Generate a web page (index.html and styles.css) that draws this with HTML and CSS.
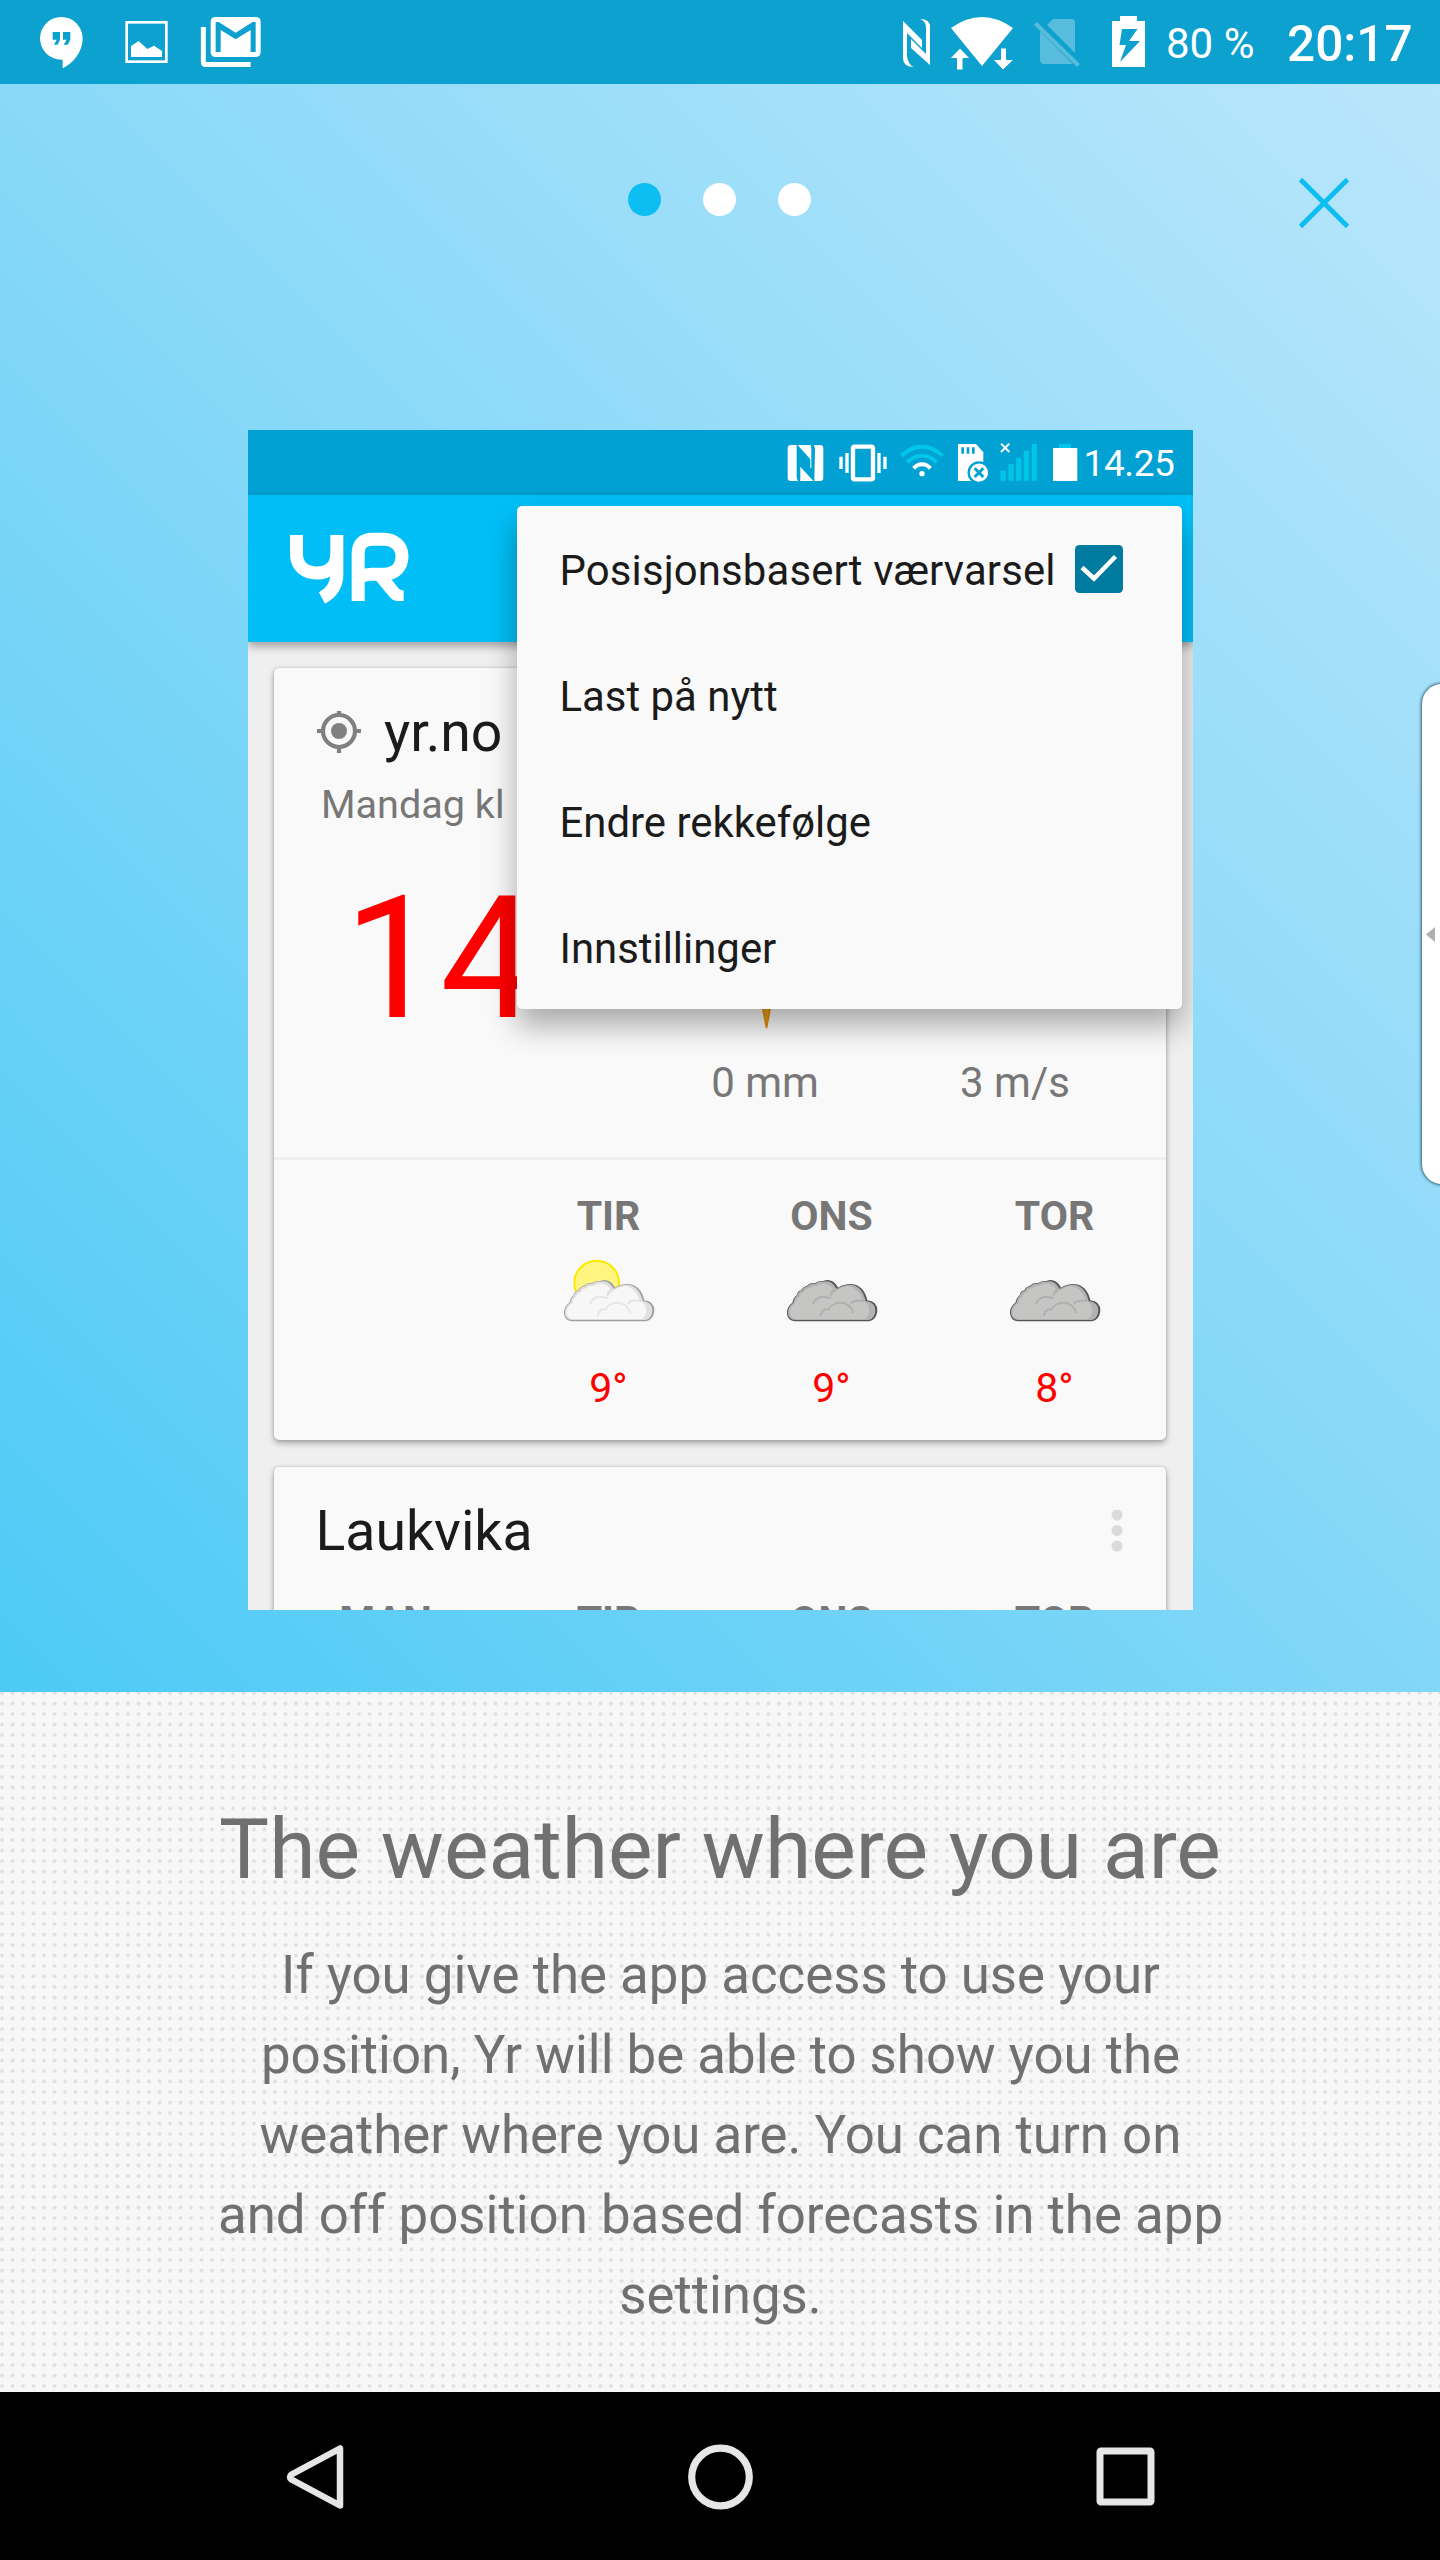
FILE: index.html
```html
<!DOCTYPE html>
<html lang="en">
<head>
<meta charset="utf-8">
<title>Yr – The weather where you are</title>
<link rel="stylesheet" href="styles.css">
</head>
<body>
<svg class="defs" aria-hidden="true">
  <defs>
    <g id="cloud">
      <path class="cloud-edge" d="M66 213C50 213 41 202 41 186C41 172 50 162 57 157Q60 142 70 135Q72 122 84 120Q90 108 100 107Q110 96 124 99Q136 90 150 92Q175 82 192 108L194 112Q212 100 235 101Q272 105 282 150Q312 152 312 182Q309 208 288 213Z"/>
      <path class="cloud-rim" d="M67 209C52 209 44 200 44 186C44 172 52 163 60 158Q62 143 71 136Q74 123 86 121Q91 109 101 109Q110 98 125 101Q136 92 150 94Q174 87 188 113L192 115Q212 102 234 103Q267 108 277 152Q306 155 306 181Q304 205 286 209Z"/>
      <path class="cloud-body" d="M69 206C56 206 49 198 49 186C49 174 58 163 67 158Q66 148 78 140Q80 128 92 126Q97 113 106 115Q118 104 130 107Q145 97 158 101Q172 104 180 115Q166 126 170 140Q190 112 224 107Q256 112 268 150Q288 160 288 181Q286 200 274 206Z"/>
      <path class="cloud-line" d="M119 162C124 144 142 136 160 141Q166 143 172 144M142 197C144 180 156 175 165 178C178 152 226 146 240 188M232 160Q246 146 272 153"/>
    </g>
  </defs>
</svg>

<header class="status">
  <div class="status-side">
    <svg width="70" height="84" viewBox="100 0 210 252" fill="#fff"><path fill-rule="evenodd" d="M185 51A64 64 0 0 1 249 115C249 155 222 190 189 205V179H185A64 64 0 0 1 185 51ZM159 96V119H171L163 134H174L181 119V96ZM190 96V119H201L192 134H204L212 119V96Z"/></svg>
    <svg width="80" height="84" viewBox="310 0 240 252"><rect x="381" y="67" width="119" height="118" fill="none" stroke="#fff" stroke-width="8"/><path fill="#fff" d="M394 171V138L417 123L443 147L463 137L487 153V171Z"/></svg>
    <svg width="84" height="84" viewBox="550 0 252 252"><rect x="633" y="51" width="150" height="120" rx="14" fill="#fff"/><path d="M648 66H657L708 98L759 66H768V156H753V90L708 118L663 90V156H648Z" fill="#0ca1cf"/><path d="M611 81V186Q611 193.500 618 193.500H753" fill="none" stroke="#fff" stroke-width="15"/></svg>
  </div>
  <div class="status-side">
    <svg width="45" height="84" viewBox="895 0 45 84" fill="#fff"><path d="M903 21L922 40V48L907 33V56Q908 65 914 67Q903 67 903 58ZM920 19Q930 19 930 27V65L911 48V39L926 54V28Q926 21 920 19Z"/></svg>
    <svg width="82" height="84" viewBox="940 0 82 84" fill="#fff"><path d="M951 28Q982 6 1013 28L982 66Z"/><path d="M960 48L970 58.500H963V70H956.500V58.500H950Z" stroke="#0ca1cf" stroke-width="1"/><path d="M1003 70L993 59.500H1000.500V48H1006.500V59.500H1014Z" stroke="#0ca1cf" stroke-width="1"/></svg>
    <svg width="73" height="84" viewBox="1022 0 73 84"><path fill="#58bcdc" d="M1040 31L1073 64H1044Q1040 64 1040 59ZM1047 25L1053 19H1072Q1075 19 1075 23V53Z"/><path d="M1035.500 23.500L1078.500 65.500" stroke="#58bcdc" stroke-width="4"/></svg>
    <svg width="70" height="84" viewBox="1095 0 70 84"><path fill="#fff" d="M1112 21H1120V16H1137V21H1145V67H1112Z"/><path fill="#0ca1cf" d="M1122 29H1137.500L1129 41H1140L1120 62L1126 45H1119.500Z"/></svg>
    <span class="battery-level">80 %</span>
    <span class="clock">20:17</span>
  </div>
</header>

<main class="hero">
  <nav class="pager">
    <span class="dot dot-active"></span><span class="dot"></span><span class="dot"></span>
    <svg class="close" width="52" height="52" viewBox="0 0 52 52"><path d="M2.500 2.500L49.500 49.500M49.500 2.500L2.500 49.500" stroke="#0cbef2" stroke-width="4.800"/></svg>
  </nav>

  <section class="phone">
    <div class="phone-status">
      <svg width="44.300" height="43.300" viewBox="200 60 133 130"><rect x="202" y="75" width="107" height="108" rx="10" fill="#fff"/><path d="M229 72L270 118V152L240 118V176Q238 183 242 186H236Q229 180 229 172ZM282 186L240 140V112L273 146V84Q273 78 268 72H276Q284 76 284 86Z" fill="#01a1d3"/><path d="M236 88L266 121V142L236 107ZM246 124L277 158V176L246 142Z" fill="#fff" opacity="0"/></svg>
      <svg width="62.300" height="43.300" viewBox="333 60 187 130" fill="none" stroke="#fff"><rect x="399" y="80" width="60" height="98" rx="5" stroke-width="13"/><path d="M363 110V147M381 99V159M477 99V159M495 110V147" stroke-width="10"/></svg>
      <svg width="56.700" height="43.300" viewBox="520 60 170 130" fill="none" stroke-width="12"><path d="M543 108C578 71 630 71 665 108M560 127C586 101 622 101 648 127" stroke="#00c6e8"/><path d="M579 145C593 129 615 129 629 145" stroke="#fff"/><circle cx="604" cy="161" r="8" fill="#fff"/></svg>
      <svg width="43.300" height="43.300" viewBox="690 60 130 130"><path fill="#fff" d="M714 72H768L790 97V183H714Z"/><path d="M728 82V101M744 82V101M760 82V101" stroke="#01a1d3" stroke-width="8"/><circle cx="777" cy="158" r="31" fill="#fff" stroke="#01a1d3" stroke-width="7"/><path d="M764 145L790 171M790 145L764 171" stroke="#01a1d3" stroke-width="9"/></svg>
      <svg width="51.700" height="43.300" viewBox="820 60 155 130"><path d="M841 71L866 96M866 71L841 96" stroke="#fff" stroke-width="6"/><path d="M847 182V152M871 182V132M894 182V113M917 182V92M941 182V72" stroke="#00c6e8" stroke-width="15.500"/></svg>
      <svg width="38.300" height="43.300" viewBox="975 60 115 130"><path fill="#00c6e8" d="M1017 72H1053V84H1017Z"/><path fill="#fff" d="M999 84H1072V183H999Z"/></svg>
      <span class="phone-clock">14.25</span>
    </div>
    <div class="toolbar">
      <svg width="122" height="74" viewBox="142 334 366 222"><g fill="none" stroke="#fff" stroke-width="39"><path d="M167.500 346V404C167.500 441 195 460 228 460C262 460 288 441 288 404"/><path d="M288.500 346V464C288.500 496 272 520 244 535"/><path d="M352.500 544V402Q352.500 358.500 396 358.500H430C462 358.500 484 380 484 410C484 443 462 463.500 430 463.500H394Q366 463.500 352.500 478"/></g><path fill="#fff" d="M404 480L450 535Q458 544 468 544H489V513Q478 513 471 503L445 470Z"/></svg>
    </div>
    <div class="content">
      <article class="card card-main">
        <div class="now">
          <h2 class="place"><svg width="44" height="44" viewBox="0 0 44 44"><g fill="none" stroke="#808080" stroke-width="4.200"><circle cx="22" cy="20" r="16"/><path d="M22 -2V4M22 36V42M0 20H6M38 20H44"/></g><circle cx="22" cy="20" r="8" fill="#808080"/></svg>yr.no</h2>
          <p class="updated">Mandag kl</p>
          <div class="readings">
            <span class="temp">14</span>
            <div class="reading"><svg width="20" height="171" viewBox="0 0 20 171"><path d="M2 120L11.500 169L21 120Z" fill="#e8a21a" stroke="#e88a00" stroke-width="1.500"/></svg><span>0 mm</span></div>
            <div class="reading"><svg width="20" height="171"></svg><span>3 m/s</span></div>
          </div>
        </div>
        <div class="days">
          <div class="day"></div>
          <div class="day"><b>TIR</b><svg class="white" width="100" height="70" viewBox="26 20 300 210"><circle cx="139" cy="98" r="67" fill="#fff580" stroke="#fbe900" stroke-width="6"/><use href="#cloud"/></svg><span>9°</span></div>
          <div class="day"><b>ONS</b><svg class="grey" width="100" height="70" viewBox="26 20 300 210"><use href="#cloud"/></svg><span>9°</span></div>
          <div class="day"><b>TOR</b><svg class="grey" width="100" height="70" viewBox="26 20 300 210"><use href="#cloud"/></svg><span>8°</span></div>
        </div>
      </article>
      <article class="card card-next">
        <h2 class="place">Laukvika<svg class="more" width="12" height="44" viewBox="0 0 12 44" fill="#dbdbdb"><circle cx="6" cy="5" r="5.500"/><circle cx="6" cy="20.500" r="5.500"/><circle cx="6" cy="36" r="5.500"/></svg></h2>
        <div class="days">
          <div class="day"><b>MAN</b></div><div class="day"><b>TIR</b></div><div class="day"><b>ONS</b></div><div class="day"><b>TOR</b></div>
        </div>
      </article>
    </div>
    <ul class="menu">
      <li class="menu-check">Posisjonsbasert værvarsel<svg width="48" height="48" viewBox="0 0 48 48"><rect width="48" height="48" rx="4.500" fill="#007ba0"/><path d="M7 22.500L19 33.500L40.500 11.500" fill="none" stroke="#fff" stroke-width="4.500"/></svg></li>
      <li>Last på nytt</li>
      <li>Endre rekkefølge</li>
      <li>Innstillinger</li>
    </ul>
  </section>
  <div class="edge-handle"><svg width="9" height="15" viewBox="0 0 9 15"><path d="M0 7.500L9 0V15Z" fill="#b0b0b0"/></svg></div>
</main>

<section class="intro">
  <h1>The weather where you are</h1>
  <p>If you give the app access to use your position, Yr will be able to show you the weather where you are. You can turn on and off position based forecasts in the app settings.</p>
</section>

<footer class="navbar">
  <svg width="70" height="70" viewBox="0 0 70 70"><path d="M60 6.500V63.500L11.500 37.500Q8.500 35 11.500 32.500Z" fill="none" stroke="#e6e6e6" stroke-width="6.500" stroke-linejoin="round"/></svg>
  <svg width="70" height="70" viewBox="0 0 70 70"><circle cx="35.500" cy="35" r="28.800" fill="none" stroke="#e6e6e6" stroke-width="7.200"/></svg>
  <svg width="70" height="70" viewBox="0 0 70 70"><rect x="10" y="9" width="51" height="51" rx="1" fill="none" stroke="#e6e6e6" stroke-width="7"/></svg>
</footer>
</body>
</html>
```
FILE: styles.css
```css
* { box-sizing: border-box; margin: 0; padding: 0; }
body {
  width: 1440px;
  height: 2560px;
  overflow: hidden;
  display: flex;
  flex-direction: column;
  font-family: Roboto, "Liberation Sans", sans-serif;
}
svg { display: block; flex: none; }
.defs { position: absolute; width: 0; height: 0; }

.status {
  height: 84px;
  flex: none;
  display: flex;
  justify-content: space-between;
  padding: 0 28px 0 33px;
  background: #0ca1cf;
  color: #fff;
}
.status-side { display: flex; align-items: center; }
.battery-level { font-size: 42px; line-height: 84px; padding: 3px 0 0 1px; width: 122px; white-space: nowrap; }
.clock { font-size: 49.5px; font-weight: 500; line-height: 84px; padding-top: 3px; width: 125px; white-space: nowrap; }

.hero {
  position: relative;
  height: 1608px;
  flex: none;
  overflow: hidden;
  background: linear-gradient(45deg, #4ccaf6 0%, #86d8f8 50%, #bae6fb 100%);
}
.pager {
  position: relative;
  height: 230px;
  margin-bottom: 116px;
  padding-right: 2px;
  display: flex;
  align-items: center;
  justify-content: center;
  gap: 42px;
}
.dot { width: 33px; height: 33px; border-radius: 50%; background: #fff; }
.dot-active { background: #0cbef2; }
.close { position: absolute; right: 90px; top: 93px; }

.phone {
  position: relative;
  width: 945px;
  height: 1180px;
  margin-left: 248px;
  overflow: hidden;
  display: flex;
  flex-direction: column;
  background: #efefef;
  color: #1b1b1b;
}
.phone-status {
  height: 65px;
  flex: none;
  display: flex;
  align-items: center;
  padding: 0 0 1px 539px;
  background: #01a1d3;
  color: #fff;
}
.phone-clock { font-size: 37px; line-height: 44px; padding-top: 3px; letter-spacing: -.4px; }
.toolbar {
  position: relative;
  height: 147px;
  flex: none;
  padding: 36px 0 0 39.5px;
  background: #01bff6;
  box-shadow: 0 4px 9px rgba(0, 0, 0, .35);
}
.content { padding: 26px 27px 0 26px; display: flex; flex-direction: column; gap: 27px; }
.card {
  border-radius: 5px;
  background: #f9f9f9;
  box-shadow: 0 3px 6px rgba(0, 0, 0, .32), 0 0 3px rgba(0, 0, 0, .14);
}
.card-main { height: 772px; }
.card-next { height: 240px; }
.now { height: 492px; border-bottom: 3px solid #eee; }
.place {
  display: flex;
  align-items: center;
  gap: 23px;
  padding: 32px 43px 0;
  font-size: 55.4px;
  font-weight: 400;
  line-height: 66px;
}
.card-next .place { padding-left: 41.5px; }
.more { margin-left: auto; }
.updated { margin-top: 14px; padding-left: 47px; font-size: 39.6px; line-height: 50px; color: #777; }
.readings { margin-top: 29px; padding-right: 26px; display: grid; grid-template-columns: 1fr 250px 250px; }
.temp { padding-left: 70px; font-size: 171px; line-height: 200px; color: #f00; }
.reading {
  display: flex;
  flex-direction: column;
  align-items: center;
  gap: 28px;
  font-size: 42px;
  line-height: 50px;
  color: #777;
}
.days { display: grid; grid-template-columns: repeat(4, 1fr); padding-top: 31px; }
.day { display: flex; flex-direction: column; align-items: center; font-size: 41px; line-height: 50px; color: #f00; }
.day b { color: #777; }
.day svg { margin: 16px 0 36px; }
.white { --edge: #a0a0a0; --rim: #e0e0e0; --body: #f7f7f7; --line: #e6e6e6; }
.grey { --edge: #555; --rim: #b2b2b2; --body: #c5c5c4; --line: #b0b0b0; }
.cloud-edge { fill: var(--edge); }
.cloud-rim { fill: var(--rim); }
.cloud-body { fill: var(--body); }
.cloud-line { fill: none; stroke: var(--line); stroke-width: 6; }

.menu {
  position: absolute;
  left: 269px;
  top: 76px;
  width: 665px;
  height: 503px;
  border-radius: 5px;
  background: #f9f9f9;
  box-shadow: 0 17px 30px rgba(0, 0, 0, .32);
  list-style: none;
}
.menu li {
  display: flex;
  align-items: center;
  height: 126px;
  padding: 3px 0 0 42.5px;
  font-size: 41.9px;
}
.menu .menu-check { gap: 19px; letter-spacing: .13px; }
.menu-check svg { position: relative; top: -2px; }

.edge-handle {
  position: absolute;
  left: 1422px;
  top: 600px;
  width: 40px;
  height: 500px;
  display: flex;
  align-items: center;
  padding-left: 4px;
  border-radius: 20px;
  background: #fff;
  box-shadow: 0 0 3px 1px rgba(20, 60, 80, .8);
}

.intro {
  height: 700px;
  flex: none;
  padding: 108px 215px 0;
  text-align: center;
  color: #707070;
  background-color: #f7f7f7;
  background-image:
    radial-gradient(circle at 5px 5px, #dcdcdc 0, #dfdfdf 1px, transparent 2.6px),
    radial-gradient(circle at 15.5px 5px, #dcdcdc 0, #dfdfdf 1px, transparent 2.6px),
    radial-gradient(circle at 5px 15.5px, #dcdcdc 0, #dfdfdf 1px, transparent 2.6px),
    radial-gradient(circle at 15.5px 15.5px, #dcdcdc 0, #dfdfdf 1px, transparent 2.6px);
  background-size: 21px 21px;
  background-position: -3px -4px;
}
.intro h1 { margin: 0 -40px; font-size: 84px; font-weight: 400; line-height: 100px; white-space: nowrap; }
.intro p { margin-top: 35px; padding-left: 1px; font-size: 52.8px; line-height: 80px; }

.navbar {
  flex: 1;
  display: flex;
  align-items: center;
  justify-content: space-between;
  padding: 1px 280px 0;
  background: #000;
}
```
